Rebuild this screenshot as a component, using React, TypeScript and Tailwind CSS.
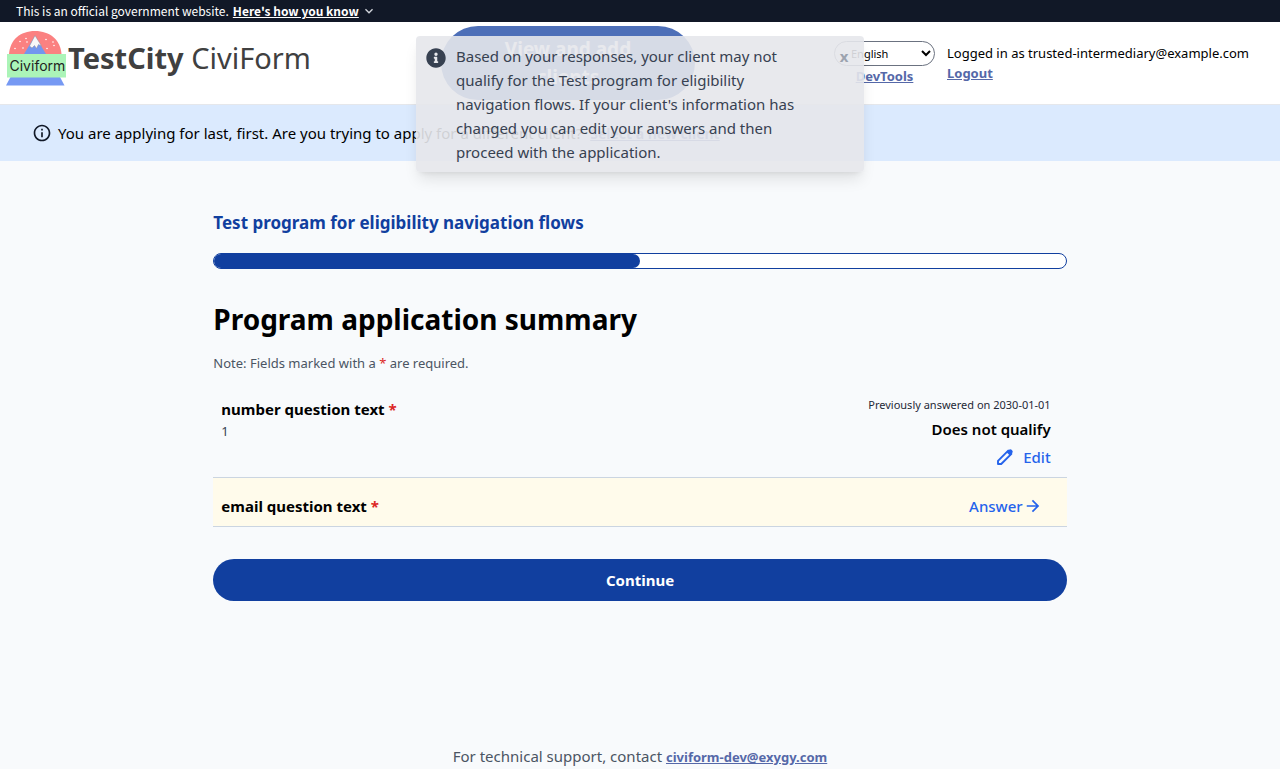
import React from "react";

function Logo() {
  return (
    <svg width="62" height="56" viewBox="0 0 62 56" role="img" aria-label="Civiform logo" className="shrink-0">
      <path d="M3 24C4 10 14 1 29 1s25.500 9 26.500 23z" fill="#fb8181" />
      <path d="M18 24 29 6l11 18z" fill="#7296ee" />
      <path d="M23.500 16 29 5.500 35.500 16l-3-1.500-2 4-2-3-2.500 2.500z" fill="#f8f8f8" stroke="#8a8a9a" strokeWidth=".5" />
      <g fill="#fff">
        <circle cx="14" cy="11.500" r=".8" />
        <circle cx="20" cy="8.500" r=".8" />
        <circle cx="9" cy="18.500" r=".8" />
        <circle cx="17" cy="18" r=".8" />
        <circle cx="21" cy="12" r=".8" />
        <circle cx="40" cy="9.500" r=".8" />
        <circle cx="47" cy="12" r=".8" />
        <circle cx="41" cy="18.500" r=".8" />
        <circle cx="48" cy="15.500" r=".8" />
      </g>
      <path d="M4.500 47h49.500l4.500 8.500H0z" fill="#7699f3" />
      <path d="M1 24h59v23.500H1z" fill="#abf4b8" />
      <text x="3.500" y="41" fontSize="14" fill="#222" fontFamily="Inter, sans-serif">Civiform</text>
    </svg>
  );
}

function ChevronIcon() {
  return (
    <svg width="16" height="16" viewBox="0 0 24 24" fill="#d1d5db" aria-hidden="true">
      <path d="M16.590 8.590 12 13.170 7.410 8.590 6 10l6 6 6-6z" />
    </svg>
  );
}

function InfoOutlineIcon() {
  return (
    <svg width="20" height="20" viewBox="0 0 24 24" fill="#111827" aria-hidden="true" className="shrink-0">
      <path d="M11 7h2v2h-2zm0 4h2v6h-2zm1-9C6.480 2 2 6.480 2 12s4.480 10 10 10 10-4.480 10-10S17.520 2 12 2zm0 18c-4.410 0-8-3.590-8-8s3.590-8 8-8 8 3.590 8 8-3.590 8-8 8z" />
    </svg>
  );
}

function InfoSolidIcon() {
  return (
    <svg width="20" height="20" viewBox="0 0 512 512" fill="#374151" aria-hidden="true" className="shrink-0">
      <path d="M256 8C119.043 8 8 119.083 8 256c0 136.997 111.043 248 248 248s248-111.003 248-248C504 119.083 392.957 8 256 8zm0 110c23.196 0 42 18.804 42 42s-18.804 42-42 42-42-18.804-42-42 18.804-42 42-42zm56 254c0 6.627-5.373 12-12 12h-88c-6.627 0-12-5.373-12-12v-24c0-6.627 5.373-12 12-12h12v-64h-12c-6.627 0-12-5.373-12-12v-24c0-6.627 5.373-12 12-12h64c6.627 0 12 5.373 12 12v100h12c6.627 0 12 5.373 12 12v24z" />
    </svg>
  );
}

function PencilIcon() {
  return (
    <svg width="20" height="20" viewBox="0 0 20 20" aria-hidden="true">
      <path d="M3 17v-3.200L13.200 3.600l3.200 3.200L6.200 17z" fill="none" stroke="currentColor" strokeWidth="1.900" strokeLinejoin="round" />
      <path d="M11.600 5.200 14 2.800a1.900 1.900 0 0 1 2.600 0l.6.600a1.900 1.900 0 0 1 0 2.600l-2.400 2.400z" fill="currentColor" />
    </svg>
  );
}

function ArrowIcon() {
  return (
    <svg width="20" height="20" viewBox="0 0 24 24" fill="currentColor" aria-hidden="true">
      <path d="M12 4.500l-1.410 1.410L15.670 11H4.500v2h11.170l-5.080 5.090L12 19.500l7.500-7.500z" />
    </svg>
  );
}

function Banner() {
  return (
    <div className="flex h-[22px] items-center bg-[#111827] px-4 font-['Noto_Sans_CJK_SC','Noto_Sans',sans-serif] text-xs text-white">
      <span>This is an official government website.</span>
      <button type="button" className="ml-1 flex items-center gap-0.5">
        <span className="font-bold underline">Here's how you know</span>
        <ChevronIcon />
      </button>
    </div>
  );
}

function Header() {
  return (
    <header className="flex items-start border-b border-[#e5e7eb] bg-white py-1 pr-5 pl-1.5">
      <div className="flex flex-1 items-center pt-1">
        <Logo />
        <a href="#home" className="text-[29px] leading-9 whitespace-nowrap text-[#404040]">
          <b>TestCity</b> CiviForm
        </a>
      </div>
      <button type="button" className="mr-[139px] w-[254px] rounded-full bg-[#4d6fb8] px-12 py-[9px] text-[19px] leading-7 font-bold text-white">
        View and add clients
      </button>
      <div className="mr-3 flex w-[101px] flex-col items-center pt-[15px]">
        <select aria-label="Language" className="h-[25px] w-full rounded-full border border-[#6b7280] bg-white pl-3 text-[11px] text-black">
          <option>English</option>
        </select>
        <a href="#devtools" className="text-[13px] leading-5 font-bold text-[#5568a8] underline">DevTools</a>
      </div>
      <div className="flex w-[313px] flex-col items-start pt-[17px] text-[13px] leading-5">
        <span className="whitespace-nowrap">Logged in as trusted-intermediary@example.com</span>
        <a href="#logout" className="font-bold text-[#5568a8] underline">Logout</a>
      </div>
    </header>
  );
}

function Toast() {
  return (
    <div role="alert" className="absolute top-9 left-1/2 flex w-full max-w-md -translate-x-1/2 rounded bg-[#e5e7eb]/90 px-2.5 py-2 text-[#374151] shadow-lg">
      <div className="pt-1">
        <InfoSolidIcon />
      </div>
      <p className="ml-2.5 w-[360px] text-[15px] leading-6">
        Based on your responses, your client may not qualify for the Test program for eligibility navigation flows. If
        your client's information has changed you can edit your answers and then proceed with the application.
      </p>
      <button type="button" aria-label="Dismiss" className="ml-auto h-6 w-5 text-[15px] font-bold text-[#9ca3af]">x</button>
    </div>
  );
}

const Required = () => <span className="text-[#dc2626]">*</span>;

export default function App() {
  return (
    <div className="relative flex min-h-screen flex-col bg-[#f8fafc] font-['Noto_Sans',sans-serif] text-[15px] leading-6 text-black">
      <Banner />
      <Header />
      <div className="flex h-14 items-center gap-1.5 bg-[#dbeafe] px-8">
        <InfoOutlineIcon />
        <p className="whitespace-nowrap">
          You are applying for last, first. Are you trying to apply for a different client?
          <a href="#clients" className="ml-2 text-sm font-bold text-[#5568a8] underline">Select a new client</a>
        </p>
      </div>
      <main className="mx-auto w-2/3 pt-12">
        <h2 className="text-[17px] leading-7 font-bold text-[#113f9f]">Test program for eligibility navigation flows</h2>
        <div role="progressbar" aria-label="Application progress" aria-valuenow={50} className="mt-4 h-4 rounded-full border border-[#113f9f] bg-white">
          <div className="h-full w-1/2 rounded-full bg-[#113f9f]" />
        </div>
        <h1 className="mt-8 text-[28px] leading-9 font-bold">Program application summary</h1>
        <p className="mt-4 text-[13px] leading-5 text-[#4b5563]">
          Note: Fields marked with a <Required /> are required.
        </p>
        <section className="mt-4 flex justify-between border-b border-[#cbd5e1] pt-2 pr-4 pb-2 pl-2">
          <div>
            <h3 className="font-bold">
              number question text <Required />
            </h3>
            <p className="text-[13px] leading-5 text-[#374151]">1</p>
          </div>
          <div className="flex flex-col items-end">
            <span className="text-[11px] leading-4 text-[#1f2937]">Previously answered on 2030-01-01</span>
            <span className="mt-1 font-semibold">Does not qualify</span>
            <a href="#edit" className="mt-1 flex items-center gap-2 font-medium text-[#2563eb]">
              <PencilIcon />
              Edit
            </a>
          </div>
        </section>
        <section className="flex justify-between border-b border-[#cbd5e1] bg-[#fffbeb] pt-4 pr-6 pb-2 pl-2">
          <h3 className="font-bold">
            email question text <Required />
          </h3>
          <a href="#answer" className="flex items-center font-medium text-[#2563eb]">
            Answer
            <ArrowIcon />
          </a>
        </section>
        <button type="button" className="mt-8 h-[42px] w-full rounded-full bg-[#113f9f] font-bold text-white">Continue</button>
      </main>
      <footer className="mt-auto text-center text-[#4b5563]">
        For technical support, contact{" "}
        <a href="mailto:civiform-dev@exygy.com" className="text-[13px] font-bold text-[#5568a8] underline">civiform-dev@exygy.com</a>
      </footer>
      <Toast />
    </div>
  );
}
